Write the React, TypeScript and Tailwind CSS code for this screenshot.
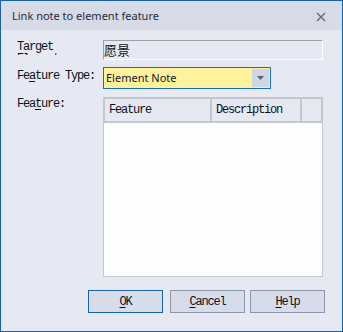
import React from "react";

const mono = { fontFamily: '"Liberation Mono", "Courier New", monospace' };
const sans = { fontFamily: '"Noto Sans", "Liberation Sans", sans-serif' };
const cjk = { fontFamily: '"Noto Sans CJK SC", "Noto Sans", sans-serif' };

function Btn({ first, rest, primary, className }: { first: string; rest: string; primary?: boolean; className?: string }) {
  return (
    <div
      className={
        "w-[75px] h-[23px] flex items-center justify-center bg-[#d6dce9] border text-[12px] leading-[12px] tracking-[-1.2px] text-[#0b1220] " +
        (primary ? "border-[#1a64ab]" : "border-[#8e97a9]") +
        " " +
        (className ?? "")
      }
      style={mono}
    >
      <span className="underline decoration-1 underline-offset-2">{first}</span>
      <span>{rest}</span>
    </div>
  );
}

const labelCls = "w-[86px] text-[12px] leading-[12px] tracking-[-1.2px] text-[#0b1220]";

export default function App() {
  return (
    <div className="w-[343px] h-[332px] border border-[#1a62a8] bg-[#e6e9f2] flex flex-col overflow-hidden">
      {/* title bar */}
      <div className="h-[29px] bg-[#d6dbe7] flex items-center pl-[11px] pr-[16px] shrink-0">
        <span className="text-[11px] text-[#1f2b44] flex-1 pt-[1px]" style={sans}>
          Link note to element feature
        </span>
        <svg width="10" height="10" viewBox="0 0 10 10" className="mt-[2px]">
          <path d="M1 1 L9 9 M9 1 L1 9" stroke="#636a74" strokeWidth="1.4" />
        </svg>
      </div>

      {/* content */}
      <div className="flex flex-col pl-[16px]">
        {/* Target */}
        <div className="flex mt-[10px]">
          <div className={labelCls + " mt-[1px] h-[14px] overflow-hidden"} style={mono}>
            <div>Target</div>
            <div>Element:</div>
          </div>
          <div className="w-[220px] h-[20px] border-t border-l border-[#9c9fa6] border-b border-r border-b-white border-r-white flex items-center">
            <span className="text-[13px] leading-[14px] text-[#0f1726]" style={cjk}>
              愿景
            </span>
          </div>
        </div>

        {/* Feature Type */}
        <div className="flex mt-[7px]">
          <div className={labelCls + " pt-[3px]"} style={mono}>
            Fe<span className="underline decoration-1 underline-offset-2">a</span>ture Type:
          </div>
          <div className="w-[168px] h-[22px] border border-[#1a6cb5] bg-[#fff29d] flex items-center">
            <span className="flex-1 pl-[2px] text-[11px] leading-[14px] text-[#111827]" style={sans}>
              Element Note
            </span>
            <div className="w-[17px] h-[18px] mr-[1px] bg-[#cfd6e4] flex items-center justify-center">
              <svg width="7" height="4" viewBox="0 0 7 4">
                <path d="M0 0 H7 L3.5 4 Z" fill="#5e636c" />
              </svg>
            </div>
          </div>
        </div>

        {/* Feature */}
        <div className="flex mt-[8px]">
          <div className={labelCls + " pt-[1px]"} style={mono}>
            Fea<span className="underline decoration-1 underline-offset-2">t</span>ure:
          </div>
          <div className="w-[220px] h-[180px] border border-[#c3c7ce] bg-[#fdfdfd] flex flex-col">
            <div
              className="h-[25px] border-x border-t border-b-2 border-[#c3c7ce] bg-[#e6e9f2] flex text-[12px] leading-[12px] tracking-[-1.2px] text-[#0b1220]"
              style={mono}
            >
              <div className="w-[107px] border-r-2 border-[#c3c7ce] flex items-center pl-[4px]">Feature</div>
              <div className="w-[90px] border-r-2 border-[#c3c7ce] flex items-center pl-[4px]">Description</div>
              <div className="flex-1" />
            </div>
          </div>
        </div>

        {/* Buttons */}
        <div className="flex mt-[13px] pl-[71px]">
          <Btn first="O" rest="K" primary />
          <Btn first="C" rest="ancel" className="ml-[7px]" />
          <Btn first="H" rest="elp" className="ml-[5px]" />
        </div>
      </div>
    </div>
  );
}
